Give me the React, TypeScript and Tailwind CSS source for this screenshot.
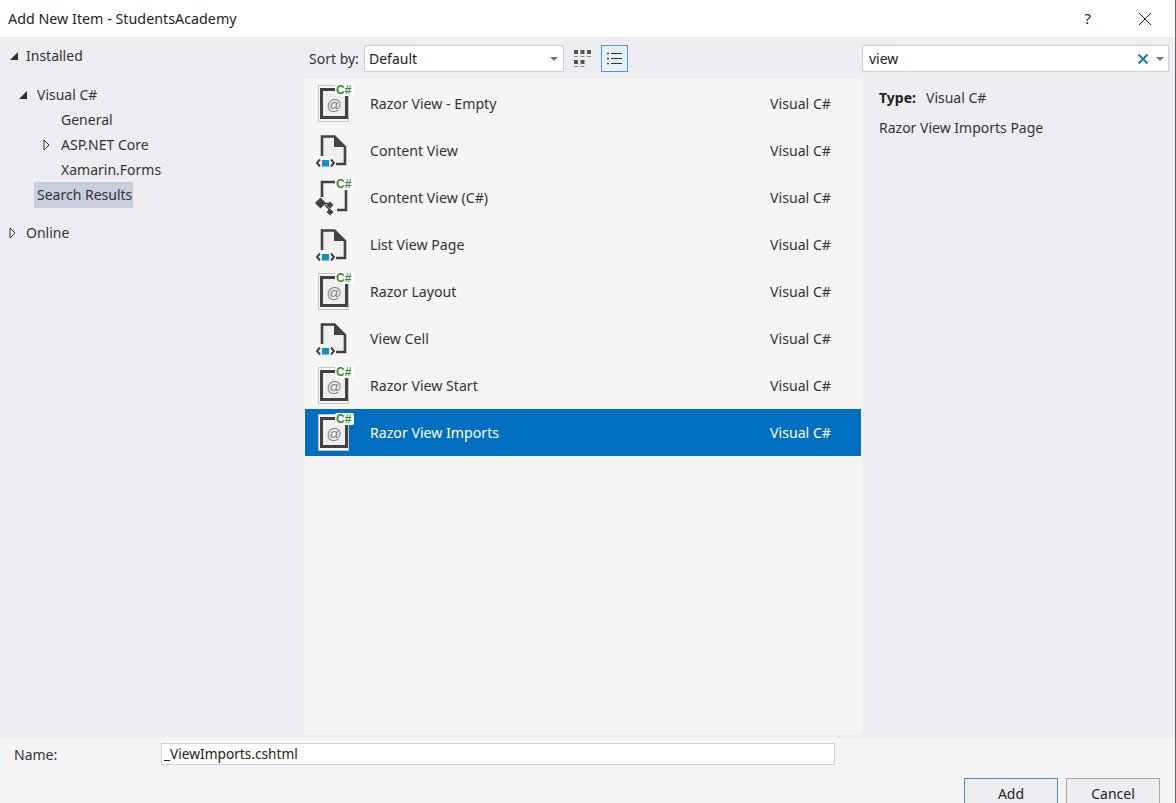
const FONT = "font-['Noto_Sans','Open_Sans',sans-serif]";

function CSharp({ x, y }: { x: number; y: number }) {
  return (
    <g>
      <rect x={x - 1} y={y - 10} width={19} height={12} rx={2} fill="#ffffff" />
      <text x={x} y={y} fontSize="12" fontWeight="700" fontFamily="'Liberation Sans',sans-serif" fill="#388a34">C#</text>
    </g>
  );
}

function RazorIcon() {
  return (
    <svg width="42" height="47" viewBox="0 0 42 47" className="shrink-0">
      <rect x="4.5" y="5.5" width="30" height="36" fill="#f6f6f6" stroke="#c4c4c4" />
      <rect x="7.5" y="9.5" width="25" height="28" fill="#efefef" stroke="#424242" strokeWidth="3" />
      <text x="20" y="30" textAnchor="middle" fontSize="15" fontFamily="'Liberation Sans',sans-serif" fill="#808080">@</text>
      <CSharp x={22} y={14} />
    </svg>
  );
}

function ContentIcon() {
  return (
    <svg width="42" height="47" viewBox="0 0 42 47" className="shrink-0">
      <path d="M8 30V9.5h12l11 11V37H22" fill="#efefef" />
      <path d="M8 31V9.5h12.5L31 20v17H21" fill="none" stroke="#424242" strokeWidth="2.6" />
      <path d="M20 9v11h11z" fill="#424242" />
      <rect x="2" y="29" width="20" height="12" fill="#f5f5f5" />
      <path d="M6 32.5l-3 3.5 3 3.5M17 32.5l3 3.5-3 3.5" fill="none" stroke="#424242" strokeWidth="2" />
      <rect x="8" y="33" width="7" height="6.5" fill="#0f8fd1" />
    </svg>
  );
}

function ContentCsIcon() {
  return (
    <svg width="42" height="47" viewBox="0 0 42 47" className="shrink-0">
      <path d="M8 23V8h13M32 16v20h-9" fill="none" stroke="#424242" strokeWidth="2.6" />
      <path d="M6.5 23.5l5.5 5.5-5.5 5.5L1 29z" fill="#424242" />
      <path d="M11 29.5h6M11 31l6 6" stroke="#424242" strokeWidth="1.5" fill="none" />
      <path d="M16 27.5l3.5 3.5-3.5 3.5-3.5-3.5zM16 34.5l3.5 3.5-3.5 3.5-3.5-3.5z" fill="#424242" />
      <CSharp x={22} y={14} />
    </svg>
  );
}

const rows = [
  ['Razor View - Empty', RazorIcon],
  ['Content View', ContentIcon],
  ['Content View (C#)', ContentCsIcon],
  ['List View Page', ContentIcon],
  ['Razor Layout', RazorIcon],
  ['View Cell', ContentIcon],
  ['Razor View Start', RazorIcon],
  ['Razor View Imports', RazorIcon],
] as const;

function Open() {
  return (
    <svg width="10" height="10" viewBox="0 0 10 10" className="shrink-0">
      <path d="M9 1v8H1z" fill="#2f2f2f" />
    </svg>
  );
}
function Closed() {
  return (
    <svg width="7" height="12" viewBox="0 0 7 12" className="shrink-0">
      <path d="M1 1l5 5-5 5z" fill="#f5f5f5" stroke="#2f2f2f" />
    </svg>
  );
}
function Caret() {
  return (
    <svg width="8" height="4" viewBox="0 0 8 4" className="shrink-0">
      <path d="M0 0h8L4 4z" fill="#777777" />
    </svg>
  );
}

export default function App() {
  return (
    <div className={`${FONT} w-[1176px] h-[803px] overflow-hidden bg-white flex flex-col text-[14px] text-[#222222] border-r border-[#666666]`}>
      <div className="h-[37px] shrink-0 flex items-center pl-2 pr-[23px]">
        <span className="flex-1 text-[#1e1e1e] text-[14.3px]">Add New Item - StudentsAcademy</span>
        <span className="mr-[47px] text-[15px]">?</span>
        <svg width="14" height="14" viewBox="0 0 14 14"><path d="M1 1l12 12M13 1L1 13" stroke="#222222" strokeWidth="1" fill="none" /></svg>
      </div>

      <div className="flex-1 min-h-0 flex bg-[#eeeef2]">
        <div className="w-[304px] shrink-0 text-[#333333]">
          <div className="h-[25px] mt-[6px] flex items-center pl-[9px] gap-[7px]"><Open /><span>Installed</span></div>
          <div className="h-[25px] mt-[14px] flex items-center pl-[18px] gap-[9px]"><Open /><span>Visual C#</span></div>
          <div className="h-[25px] flex items-center pl-[61px]">General</div>
          <div className="h-[25px] flex items-center pl-[43px] gap-[11px]"><Closed /><span>ASP.NET Core</span></div>
          <div className="h-[25px] flex items-center pl-[61px]">Xamarin.Forms</div>
          <div className="h-[26px] ml-[34px] w-[99px] flex items-center pl-[3px] pb-[2px] bg-[#c9cedc] whitespace-nowrap">Search Results</div>
          <div className="h-[25px] mt-[12px] flex items-center pl-[9px] gap-[10px]"><Closed /><span>Online</span></div>
        </div>

        <div className="w-[558px] shrink-0 flex flex-col">
          <div className="h-[42px] shrink-0 flex items-center pt-[1px]">
            <span className="ml-[5px] w-[55px] text-[#333333]">Sort by:</span>
            <div className="w-[200px] h-[27px] bg-white border border-[#ccced8] flex items-center justify-between pl-[4px] pr-[5px]">
              <span>Default</span>
              <Caret />
            </div>
            <div className="w-[37px] h-[27px] flex items-center justify-center">
              <svg width="18" height="18" viewBox="0 0 18 18">
                <path d="M0 0h4v4H0zM6.5 0h4v4h-4zM13 0h4v4h-4zM0 10h4v4H0zM6.5 10h4v4h-4z" fill="#555555" />
                <path d="M0 6.5h4M6.5 6.5h4M13 6.5h4M0 16.5h4M6.5 16.5h4" stroke="#8a8a8a" strokeWidth="1" />
              </svg>
            </div>
            <div className="w-[27px] h-[27px] border border-[#4a9ad4] bg-[#e9eff7] flex items-center justify-center">
              <svg width="15" height="13" viewBox="0 0 15 13">
                <path d="M0 1.5h2M0 6.5h2M0 11.5h2" stroke="#424242" strokeWidth="1.4" />
                <path d="M4 1.5h11M4 6.5h11M4 11.5h11" stroke="#333333" strokeWidth="1.2" />
              </svg>
            </div>
          </div>
          <div className="h-[656px] bg-[#f5f5f5] pt-px">
            {rows.map(([name, Icon], i) => {
              const sel = i === 7;
              return (
                <div key={name} className={`h-[47px] flex items-center pl-[9px] mx-px text-[14.15px] ${sel ? 'bg-[#006fc0] text-white' : 'text-[#333333]'}`}>
                  <Icon />
                  <span className="ml-[14px] w-[400px]">{name}</span>
                  <span>Visual C#</span>
                </div>
              );
            })}
          </div>
        </div>

        <div className="flex-1 min-w-0">
          <div className="h-[42px] flex items-center pt-[1px]">
            <div className="w-[307px] h-[27px] bg-white border border-[#ccced8] flex items-center pl-[6px] pr-[4px]">
              <span className="flex-1">view</span>
              <svg width="12" height="12" viewBox="0 0 12 12" className="mr-[7px]"><path d="M1.5 1.5l9 9M10.5 1.5l-9 9" stroke="#1f76bd" strokeWidth="2" /></svg>
              <Caret />
            </div>
          </div>
          <div className="pl-[17px] pt-[6px] text-[#333333]">
            <div className="h-[24px] flex items-center"><span className="font-bold w-[47px] text-[#222222]">Type:</span><span>Visual C#</span></div>
            <div className="h-[24px] mt-[6px] flex items-center">Razor View Imports Page</div>
          </div>
        </div>
      </div>

      <div className="h-[65px] shrink-0 bg-[#f5f5f7] flex flex-col">
        <div className="flex items-center pt-[5px] pl-[14px]">
          <span className="w-[147px] text-[#333333] pt-[1px]">Name:</span>
          <div className="w-[674px] h-[22px] bg-white border border-[#ccced8] flex items-center pl-[2px] text-[13.7px]">_ViewImports.cshtml</div>
        </div>
        <div className="flex justify-end gap-2 mt-[13px] pr-[15px]">
          <div className="w-[94px] h-[31px] shrink-0 border border-[#3f8fd0] bg-[#eeeef2] flex items-center justify-center">Add</div>
          <div className="w-[94px] h-[31px] shrink-0 border border-[#a8a8a8] bg-[#eeeef2] flex items-center justify-center">Cancel</div>
        </div>
      </div>
    </div>
  );
}
